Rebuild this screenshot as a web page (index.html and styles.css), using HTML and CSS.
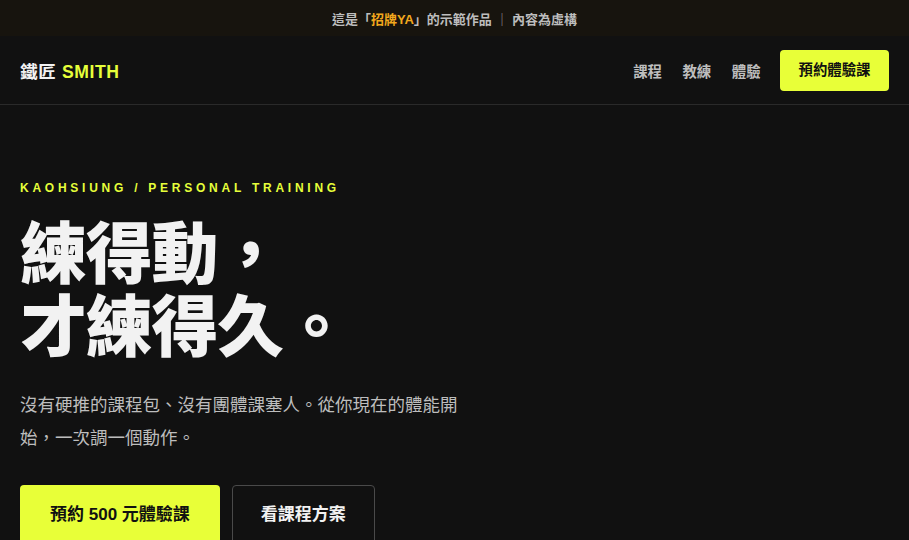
FILE: index.html
```html
<!DOCTYPE html>
<html lang="zh-Hant">
<head>
<meta charset="utf-8">
<title>鐵匠 SMITH</title>
<link rel="stylesheet" href="styles.css">
</head>
<body>
<div class="banner">這是「<span class="brand">招牌YA</span>」的示範作品 <span class="sep">｜</span> 內容為虛構</div>
<header class="nav">
  <div class="logo">鐵匠 <span class="accent">SMITH</span></div>
  <nav class="links">
    <a href="#">課程</a>
    <a href="#">教練</a>
    <a href="#">體驗</a>
    <a href="#" class="cta">預約體驗課</a>
  </nav>
</header>
<main class="hero">
  <p class="eyebrow">KAOHSIUNG / PERSONAL TRAINING</p>
  <h1 class="title">練得動，<br>才練得久。</h1>
  <p class="lead">沒有硬推的課程包、沒有團體課塞人。從你現在的體能開始，一次調一個動作。</p>
  <div class="actions">
    <a href="#" class="btn primary">預約 500 元體驗課</a>
    <a href="#" class="btn ghost">看課程方案</a>
  </div>
</main>
</body>
</html>
```

FILE: styles.css
```css
* { box-sizing: border-box; }
html, body { margin: 0; padding: 0; }
body {
  background: #111111;
  color: #f2f2f2;
  font-family: "Liberation Sans", "Noto Sans CJK TC", sans-serif;
  overflow: hidden;
}
a { text-decoration: none; color: inherit; }

.banner {
  height: 36px;
  background: #17140e;
  color: #bdbdbd;
  font-size: 13px;
  font-weight: 700;
  display: flex;
  align-items: center;
  justify-content: center;
  white-space: pre;
}
.banner .brand { color: #f2a81d; }
.banner .sep { color: #8a8a8a; }

.nav {
  height: 69px;
  border-bottom: 1px solid #2a2a2a;
  display: flex;
  align-items: center;
  justify-content: space-between;
  padding: 0 20px;
}
.logo {
  font-size: 17.6px;
  font-weight: 700;
  color: #f2f2f2;
  letter-spacing: 0.6px;
}
.logo .accent { color: #e6ff3a; }
.links {
  display: flex;
  align-items: center;
  gap: 20.5px;
}
.links a {
  font-size: 14.4px;
  font-weight: 700;
  color: #bdbdbd;
}
.links a.cta {
  margin-left: -1px;
  background: #e8ff38;
  color: #111;
  border-radius: 4px;
  padding: 11px 18.5px;
  line-height: 19px;
}

.hero {
  padding: 76px 20px 0;
}
.eyebrow {
  margin: 0;
  color: #e6ff3a;
  font-size: 12px;
  font-weight: 700;
  letter-spacing: 3.75px;
  line-height: 14px;
}
.title {
  margin: 23px 0 0;
  font-size: 67px;
  line-height: 73px;
  font-weight: 900;
  color: #f2f2f2;
  letter-spacing: -1.3px;
}
.lead {
  margin: 25px 0 0;
  max-width: 460px;
  font-size: 17.5px;
  line-height: 33px;
  color: #bdbdbd;
}
.actions {
  margin-top: 30px;
  display: flex;
  gap: 12px;
}
.btn {
  display: inline-block;
  padding: 20px 30px;
  font-size: 17px;
  line-height: 20px;
  font-weight: 700;
  border-radius: 4px;
}
.btn.primary { background: #e8ff38; color: #111; }
.btn.ghost { border: 1px solid #4a4a4a; color: #f2f2f2; padding: 19px 28px; }
```
